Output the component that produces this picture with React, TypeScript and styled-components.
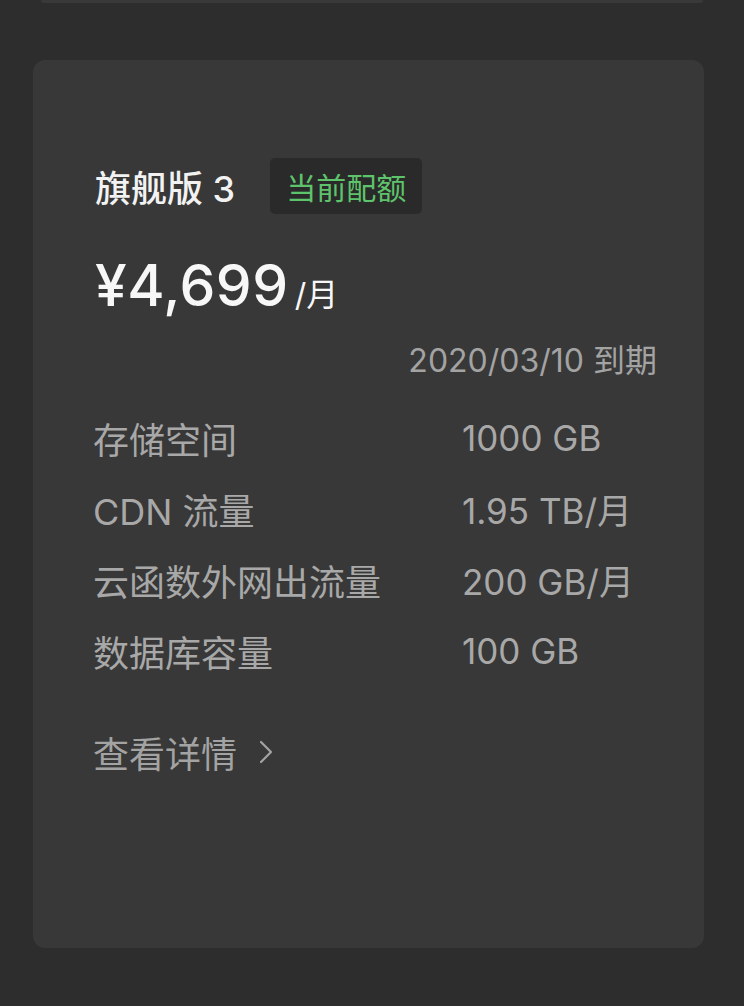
import styled, { createGlobalStyle } from 'styled-components';

const GlobalStyle = createGlobalStyle`
  html, body {
    margin: 0;
    padding: 0;
    background: #2d2d2d;
  }
  body {
    font-family: Inter, "Noto Sans CJK SC", sans-serif;
    -webkit-font-smoothing: antialiased;
  }
`;

const Page = styled.div`
  width: 744px;
  height: 1006px;
  overflow: hidden;
  background: #2d2d2d;
  display: flex;
  flex-direction: column;
  align-items: center;
  gap: 57px;
`;

const PrevCard = styled.div`
  width: 662px;
  height: 3px;
  background: #393939;
  border-radius: 0 0 10px 10px;
`;

const Card = styled.section`
  width: 671px;
  box-sizing: border-box;
  height: 888px;
  margin-left: -7px;
  background: #383838;
  border-radius: 12px;
  padding: 98px 47px 0 62px;
  display: flex;
  flex-direction: column;
`;

const TitleRow = styled.div`
  display: flex;
  align-items: center;
  gap: 35px;
`;

const Title = styled.h2`
  margin: 0;
  font-size: 36px;
  font-weight: 500;
  color: #f2f2f2;
`;

const Badge = styled.span`
  display: inline-flex;
  align-items: center;
  height: 56px;
  padding: 0 16px;
  border-radius: 5px;
  background: #2a2a2a;
  color: #5ec46c;
  font-size: 30px;
`;

const Price = styled.div`
  margin-top: 37px;
  display: flex;
  align-items: baseline;
  color: #f7f7f7;
`;

const Amount = styled.span`
  font-size: 57px;
  font-weight: 500;
  letter-spacing: 0.5px;
`;

const Unit = styled.span`
  margin-left: 6px;
  font-size: 32px;
`;

const Expire = styled.div`
  align-self: flex-end;
  margin-top: 15px;
  font-size: 32px;
  color: #a3a3a3;
`;

const SpecList = styled.dl`
  margin: 21px 0 0 -2px;
  display: grid;
  grid-template-columns: 369px 1fr;
  grid-auto-rows: 71px;
  align-items: center;
`;

const SpecLabel = styled.dt`
  font-size: 36px;
  color: #a8a8a8;
`;

const SpecValue = styled.dd`
  margin: 0;
  font-size: 35px;
  color: #a8a8a8;
`;

const DetailLink = styled.a`
  margin: 40px 0 0 -2px;
  display: inline-flex;
  align-items: center;
  gap: 22px;
  font-size: 36px;
  color: #a3a3a3;
  text-decoration: none;
`;

const specs = [
  { label: '存储空间', value: '1000 GB' },
  { label: 'CDN 流量', value: '1.95 TB/月' },
  { label: '云函数外网出流量', value: '200 GB/月' },
  { label: '数据库容量', value: '100 GB' },
];

function App() {
  return (
    <>
      <GlobalStyle />
      <Page>
        <PrevCard />
        <Card>
          <TitleRow>
            <Title>旗舰版 3</Title>
            <Badge>当前配额</Badge>
          </TitleRow>
          <Price>
            <Amount>¥4,699</Amount>
            <Unit>/月</Unit>
          </Price>
          <Expire>2020/03/10 到期</Expire>
          <SpecList>
            {specs.map((s) => (
              <>
                <SpecLabel key={s.label}>{s.label}</SpecLabel>
                <SpecValue key={s.label + '-v'}>{s.value}</SpecValue>
              </>
            ))}
          </SpecList>
          <DetailLink href="#">
            查看详情
            <svg width="14" height="24" viewBox="0 0 14 24" fill="none">
              <polyline points="2,2 12,12 2,22" stroke="#a3a3a3" strokeWidth="2.2" strokeLinecap="round" strokeLinejoin="round" />
            </svg>
          </DetailLink>
        </Card>
      </Page>
    </>
  );
}

export default App;
